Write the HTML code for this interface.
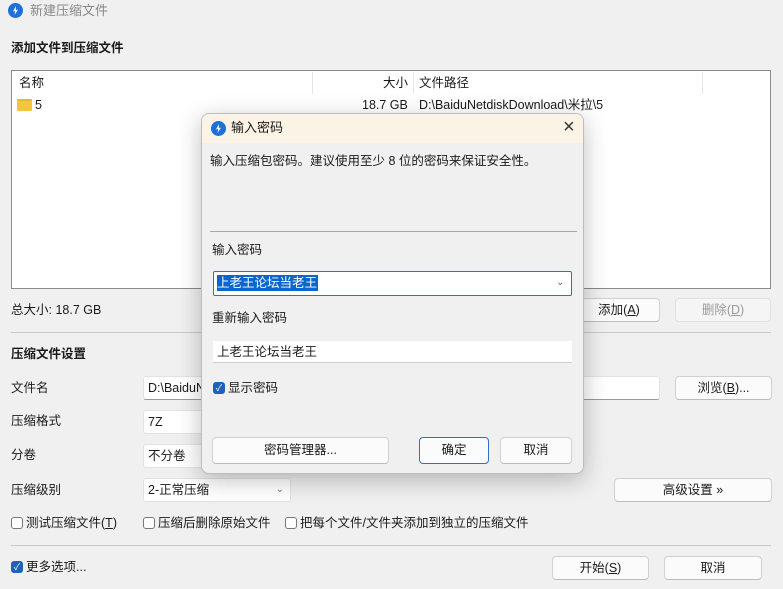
<!DOCTYPE html>
<html><head><meta charset="utf-8"><style>
*{box-sizing:border-box;margin:0;padding:0}
body{width:783px;height:589px;background:#f0f0f0;font-family:"Liberation Sans","Noto Sans CJK SC",sans-serif;font-size:12.5px;line-height:15px;color:#1a1a1a;position:relative;overflow:hidden}
.a{position:absolute;white-space:nowrap}
.btn{position:absolute;background:#fbfbfb;border:1px solid #d0d0d0;border-bottom-color:#bcbcbc;border-radius:4px;text-align:center;font-size:12.5px}
.inp{position:absolute;background:#fff;border:1px solid #e3e3e3;border-bottom-color:#9a9a9a;border-radius:3px;padding-left:4px}
.cb{position:absolute;width:12px;height:12px;border:1px solid #777;border-radius:3px;background:#fff}
.cbc{position:absolute;width:12px;height:12px;border-radius:3px;background:#1d62b8;color:#fff;font-size:9px;line-height:12px;text-align:center}
.icon{position:absolute;width:15px;height:15px;border-radius:50%;background:#1e6fd9}
.icon:after{content:"";position:absolute;left:5px;top:3px;width:5px;height:9px;background:#fff;clip-path:polygon(60% 0,0 60%,45% 55%,30% 100%,100% 40%,55% 45%)}
</style></head><body>
<div class="icon" style="left:8px;top:3px"></div>
<div class="a" style="left:30px;top:3px;color:#888;font-size:13px">新建压缩文件</div>
<div class="a" style="left:11px;top:41px;font-weight:bold">添加文件到压缩文件</div>

<div class="a" style="left:11px;top:70px;width:760px;height:219px;background:#fff;border:1px solid #8a8a8a"></div>
<div class="a" style="left:312px;top:72px;width:1px;height:22px;background:#e5e5e5"></div>
<div class="a" style="left:413px;top:72px;width:1px;height:22px;background:#e5e5e5"></div>
<div class="a" style="left:702px;top:72px;width:1px;height:22px;background:#e5e5e5"></div>
<div class="a" style="left:19px;top:76px">名称</div>
<div class="a" style="left:383px;top:76px">大小</div>
<div class="a" style="left:419px;top:76px">文件路径</div>
<div class="a" style="left:17px;top:99px;width:15px;height:12px;background:#f4c542;border-radius:1px;border-top:2px solid #e8b830"></div>
<div class="a" style="left:35px;top:98px">5</div>
<div class="a" style="left:362px;top:98px">18.7 GB</div>
<div class="a" style="left:419px;top:98px">D:\BaiduNetdiskDownload\米拉\5</div>

<div class="a" style="left:11px;top:303px">总大小: 18.7 GB</div>
<div class="btn" style="left:578px;top:298px;width:82px;height:24px;line-height:22px">添加(<u>A</u>)</div>
<div class="btn" style="left:675px;top:298px;width:96px;height:24px;line-height:22px;color:#999;background:#f5f5f5;border-color:#e0e0e0">删除(<u>D</u>)</div>
<div class="a" style="left:11px;top:332px;width:760px;height:1px;background:#c8c8c8"></div>
<div class="a" style="left:11px;top:347px;font-weight:bold">压缩文件设置</div>

<div class="a" style="left:11px;top:381px">文件名</div>
<div class="inp" style="left:143px;top:376px;width:517px;height:24px;line-height:22px">D:\BaiduNetdiskDownload\米拉\5.7z</div>
<div class="btn" style="left:675px;top:376px;width:97px;height:24px;line-height:22px">浏览(<u>B</u>)...</div>
<div class="a" style="left:11px;top:414px">压缩格式</div>
<div class="inp" style="left:143px;top:410px;width:150px;height:24px;line-height:22px;border-color:#e3e3e3">7Z</div>
<div class="a" style="left:11px;top:448px">分卷</div>
<div class="inp" style="left:143px;top:444px;width:150px;height:24px;line-height:22px;border-color:#e3e3e3">不分卷</div>
<div class="a" style="left:11px;top:483px">压缩级别</div>
<div class="inp" style="left:143px;top:478px;width:148px;height:24px;line-height:22px;border-color:#e0e0e0">2-正常压缩<span style="position:absolute;right:6px;color:#777;font-size:10px">&#8964;</span></div>
<div class="btn" style="left:614px;top:478px;width:158px;height:24px;line-height:22px">高级设置 »</div>

<div class="cb" style="left:11px;top:517px"></div><div class="a" style="left:26px;top:516px">测试压缩文件(<u>T</u>)</div>
<div class="cb" style="left:143px;top:517px"></div><div class="a" style="left:158px;top:516px">压缩后删除原始文件</div>
<div class="cb" style="left:285px;top:517px"></div><div class="a" style="left:300px;top:516px">把每个文件/文件夹添加到独立的压缩文件</div>
<div class="a" style="left:11px;top:545px;width:760px;height:1px;background:#c8c8c8"></div>
<div class="cbc" style="left:11px;top:561px">✓</div><div class="a" style="left:26px;top:560px">更多选项...</div>
<div class="btn" style="left:552px;top:556px;width:97px;height:24px;line-height:22px">开始(<u>S</u>)</div>
<div class="btn" style="left:664px;top:556px;width:98px;height:24px;line-height:22px">取消</div>

<div class="a" style="left:201px;top:113px;width:383px;height:361px;background:#f0f0f0;border:1px solid #bdbdbd;border-radius:8px;box-shadow:0 6px 24px rgba(0,0,0,.25);overflow:hidden">
 <div class="a" style="left:0;top:0;width:383px;height:29px;background:#fbf3e6"></div>
 <div class="icon" style="left:9px;top:7px"></div>
 <div class="a" style="left:29px;top:6px;font-size:13px">输入密码</div>
 <div class="a" style="left:361px;top:3px;font-size:20px;line-height:20px;color:#333">×</div>
 <div class="a" style="left:8px;top:40px">输入压缩包密码。建议使用至少 8 位的密码来保证安全性。</div>
 <div class="a" style="left:8px;top:117px;width:367px;height:1px;background:#a9a9a9"></div>
 <div class="a" style="left:10px;top:129px">输入密码</div>
 <div class="a" style="left:11px;top:157px;width:359px;height:25px;background:#fff;border:1px solid #2f70c6;border-radius:2px"></div>
 <div class="a" style="left:15px;top:161px;background:#0a66cc;color:#fff;line-height:16px;padding-right:1px">上老王论坛当老王</div>
 <div class="a" style="left:354px;top:161px;color:#666;font-size:10px">&#8964;</div>
 <div class="a" style="left:10px;top:197px">重新输入密码</div>
 <div class="a" style="left:11px;top:227px;width:359px;height:22px;background:#fff;border-bottom:1px solid #ccc"></div>
 <div class="a" style="left:15px;top:231px">上老王论坛当老王</div>
 <div class="cbc" style="left:11px;top:268px">✓</div><div class="a" style="left:26px;top:267px">显示密码</div>
 <div class="btn" style="left:10px;top:323px;width:177px;height:27px;line-height:25px">密码管理器...</div>
 <div class="btn" style="left:217px;top:323px;width:70px;height:27px;line-height:25px;border-color:#2f70c6">确定</div>
 <div class="btn" style="left:298px;top:323px;width:72px;height:27px;line-height:25px">取消</div>
</div>
</body></html>
